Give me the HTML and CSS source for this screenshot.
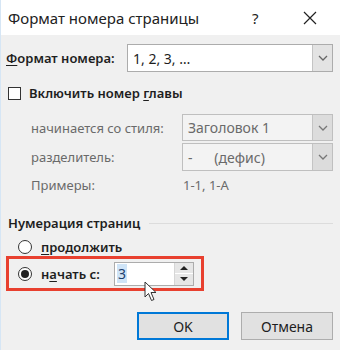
FILE: index.html
```html
<!DOCTYPE html>
<html lang="ru">
<head>
    <meta charset="UTF-8">
    <title>Формат номера страницы</title>
    <link rel="stylesheet" href="styles.css">
</head>
<body>
    <div class="dialog">
        <div class="titlebar">
            <span class="title">Формат номера страницы</span>
            <span class="help">?</span>
            <span class="close">
                <svg width="14" height="14" viewBox="0 0 14 14"><path d="M1 1L13 13M13 1L1 13" stroke="#222" stroke-width="1.2"/></svg>
            </span>
        </div>
        <div class="content">
            <div class="formatRow">
                <span class="label"><u>Ф</u>ормат номера:</span>
                <div class="combo">
                    <span class="value">1, 2, 3, …</span>
                    <span class="arrow"><svg width="10" height="6" viewBox="0 0 10 6"><path d="M1 1L5 5L9 1" fill="none" stroke="#666" stroke-width="1.3"/></svg></span>
                </div>
            </div>
            <div class="checkRow">
                <span class="checkbox"></span>
                <span>Включить номер <u>г</u>лавы</span>
            </div>
            <div class="chapter">
                <span class="dim">начинается со стиля:</span>
                <div class="combo disabled">
                    <span class="value">Заголовок 1</span>
                    <span class="arrow"><svg width="10" height="6" viewBox="0 0 10 6"><path d="M1 1L5 5L9 1" fill="none" stroke="#777" stroke-width="1.3"/></svg></span>
                </div>
                <span class="dim">разделитель:</span>
                <div class="combo disabled">
                    <span class="value">-&nbsp;&nbsp;&nbsp;&nbsp;&nbsp;&nbsp;(дефис)</span>
                    <span class="arrow"><svg width="10" height="6" viewBox="0 0 10 6"><path d="M1 1L5 5L9 1" fill="none" stroke="#777" stroke-width="1.3"/></svg></span>
                </div>
                <span class="dim">Примеры:</span>
                <span class="dim example">1-1, 1-A</span>
            </div>
            <div class="groupTitle">
                <span>Нумерация страниц</span>
                <span class="line"></span>
            </div>
            <div class="radioRow first">
                <span class="radio"></span>
                <span><u>п</u>родолжить</span>
            </div>
            <div class="highlight">
                <div class="radioRow">
                    <span class="radio checked"></span>
                    <span class="startLabel">н<u>а</u>чать с:</span>
                    <div class="spin">
                        <span class="spinValue"><span class="selected">3</span></span>
                        <span class="spinButtons">
                            <span class="up"></span>
                            <span class="down"></span>
                        </span>
                    </div>
                </div>
            </div>
            <div class="buttons">
                <span class="btn ok">OK</span>
                <span class="btn">Отмена</span>
            </div>
        </div>
        <svg class="cursor" width="14" height="21" viewBox="0 0 14 21">
            <path d="M1 1L1 16L4.5 12.5L7.5 19.5L10 18.5L7 11.5L12 11.5Z" fill="#fff" stroke="#333" stroke-width="1"/>
        </svg>
    </div>
</body>
</html>
```

FILE: styles.css
```css
*{
    box-sizing: border-box;
}
body{
    margin: 0;
    font-family: "Noto Sans", "Open Sans", sans-serif;
    font-size: 13px;
    color: #1e1e1e;
}
.dialog{
    position: relative;
    width: 340px;
    height: 350px;
    background-color: #f0f0f0;
    border-left: 1px solid #d6e6f5;
}
.titlebar{
    display: flex;
    align-items: center;
    height: 35px;
    background-color: #fff;
    font-size: 15px;
    color: #222;
}
.title{
    margin-left: 7px;
    flex: 1;
}
.help{
    width: 18px;
    margin-right: 33px;
}
.close{
    display: flex;
    margin-right: 23px;
}
.content{
    padding: 9px 7px 0 5px;
}
.formatRow{
    display: flex;
    align-items: center;
    font-weight: 600;
}
.label{
    width: 121px;
}
u{
    text-decoration-thickness: 1px;
    text-underline-offset: 2px;
}
.combo{
    flex: 1;
    display: flex;
    height: 28px;
    border: 1px solid #acacac;
    background-color: #fff;
    font-weight: 400;
}
.combo .value{
    flex: 1;
    display: flex;
    align-items: center;
    padding-left: 5px;
    font-size: 14px;
}
.combo .arrow{
    width: 20px;
    display: flex;
    align-items: center;
    justify-content: center;
    background-color: #e3e3e3;
    border-left: 1px solid #c4c4c4;
}
.combo.disabled{
    background-color: #f3f3f3;
    border-color: #bfbfbf;
    color: #6a6a6a;
}
.combo.disabled .arrow{
    background-color: #dcdcdc;
}
.checkRow{
    display: flex;
    align-items: center;
    gap: 8px;
    height: 20px;
    margin-top: 11px;
    margin-left: 2px;
    font-weight: 600;
}
.checkbox{
    width: 13px;
    height: 13px;
    border: 1px solid #333;
    background-color: #fff;
}
.chapter{
    display: grid;
    grid-template-columns: 151px 1fr;
    grid-template-rows: 27px 28px 24px;
    row-gap: 2px;
    align-items: center;
    margin-top: 11px;
    padding-left: 25px;
}
.chapter .combo{
    height: 100%;
}
.dim{
    color: #6a6a6a;
}
.example{
    padding-left: 1px;
}
.groupTitle{
    display: flex;
    align-items: center;
    gap: 9px;
    margin-top: 17px;
    margin-left: 2px;
    font-weight: 600;
}
.groupTitle .line{
    flex: 1;
    height: 1px;
    background-color: #dcdcdc;
}
.radioRow{
    display: flex;
    align-items: center;
    gap: 9px;
    font-weight: 600;
}
.radioRow.first{
    margin-top: 6px;
    margin-left: 12px;
    height: 18px;
}
.radio{
    width: 14px;
    height: 14px;
    border: 1px solid #333;
    border-radius: 50%;
    background-color: #fff;
    display: flex;
    align-items: center;
    justify-content: center;
}
.radio.checked::after{
    content: "";
    width: 8px;
    height: 8px;
    border-radius: 50%;
    background-color: #222;
}
.highlight{
    width: 198px;
    height: 35px;
    margin-top: 0;
    border: 3px solid #e8402f;
    padding-left: 9px;
    display: flex;
    align-items: center;
}
.startLabel{
    width: 64px;
}
.spin{
    display: flex;
    width: 80px;
    height: 24px;
    border: 1px solid #acacac;
    background-color: #fff;
    font-weight: 400;
}
.spinValue{
    flex: 1;
    display: flex;
    align-items: center;
    padding-left: 2px;
    font-size: 14px;
}
.selected{
    background-color: #cfe4f7;
    color: #1c3f6e;
    padding: 0 1px;
}
.spinButtons{
    width: 19px;
    display: flex;
    flex-direction: column;
    gap: 1px;
    border-left: 1px solid #d6d6d6;
    background-color: #fff;
}
.spinButtons span{
    flex: 1;
    display: flex;
    align-items: center;
    justify-content: center;
    background-color: #e6e6e6;
}
.spinButtons .up::after{
    content: "";
    border-left: 4px solid transparent;
    border-right: 4px solid transparent;
    border-bottom: 4px solid #222;
}
.spinButtons .down::after{
    content: "";
    border-left: 4px solid transparent;
    border-right: 4px solid transparent;
    border-top: 4px solid #222;
}
.buttons{
    display: flex;
    justify-content: flex-end;
    gap: 12px;
    margin-top: 21px;
}
.btn{
    width: 92px;
    height: 28px;
    display: flex;
    align-items: center;
    justify-content: center;
    background-color: #e1e1e1;
    border: 1px solid #adadad;
    font-size: 14px;
}
.btn.ok{
    border: 2px solid #0078d7;
}
.cursor{
    position: absolute;
    left: 143px;
    top: 281px;
}
```
